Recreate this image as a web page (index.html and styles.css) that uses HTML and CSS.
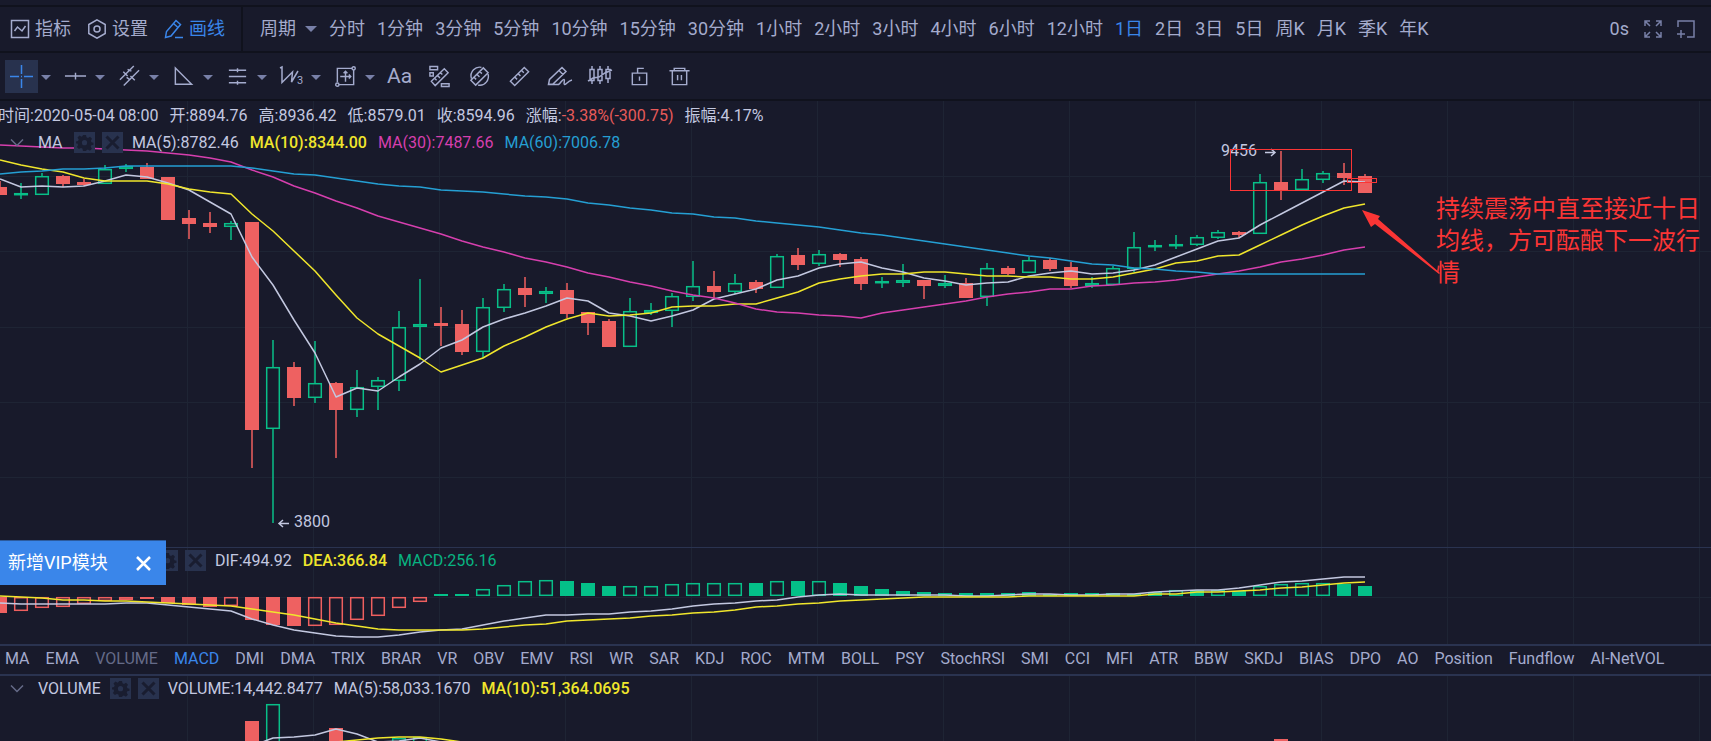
FILE: index.html
```html
<!DOCTYPE html>
<html lang="zh-CN">
<head>
<meta charset="utf-8">
<title>K线图</title>
<link rel="stylesheet" href="styles.css">
</head>
<body>
<svg class="defs" aria-hidden="true">
  <symbol id="gear" viewBox="0 0 21 21"><path d="M9 3h3l.5 2.2 1.5.7 2-1.2 2 2-1.200 2 .7 1.500 2 .5v2l-2.200.6-.6 1.500 1.200 2-2 2-2-1.200-1.500.7L12 19H9l-.6-2.400-1.500-.7-2 1.200-2-2 1.200-2-.6-1.500L2 11.500v-2l2-.5.7-1.500-1.200-2 2-2 2 1.200 1.100-.7z"/><circle cx="10.500" cy="10.700" r="2.600" class="hole"/></symbol>
  <symbol id="cross" viewBox="0 0 21 21"><path d="M4.500 4.500l12 12M16.500 4.500l-12 12"/></symbol>
</svg>
<div class="app">
  <div class="strip"></div>
  <header class="topbar">
    <nav class="modes">
      <button class="mode"><svg width="20" height="20" viewBox="0 0 20 20"><path d="M1.500 1.500h17v17h-17zM4.500 12l3-4 4.500 4 3.500-5"/></svg>指标</button>
      <button class="mode"><svg width="20" height="20" viewBox="0 0 20 20"><path d="M10 .8l8.200 4.700v9L10 19.200l-8.200-4.700v-9z"/><circle cx="10" cy="10" r="3"/></svg>设置</button>
      <button class="mode on"><svg width="20" height="20" viewBox="0 0 20 20"><path d="M1.500 18.500l1-6L12 1.500l4.500 4L7 17zM9.500 4.500l4.500 4M11 18.500h8"/></svg>画线</button>
    </nav>
    <div class="periods">
      <label class="picker"><select aria-label="周期"><option>周期</option></select><svg class="caret" width="12" height="6" viewBox="0 0 12 6"><path d="M0 0h12L6 6z"/></svg></label>
      <button>分时</button><button>1分钟</button><button>3分钟</button><button>5分钟</button><button>10分钟</button><button>15分钟</button><button>30分钟</button><button>1小时</button><button>2小时</button><button>3小时</button><button>4小时</button><button>6小时</button><button>12小时</button><button class="on">1日</button><button>2日</button><button>3日</button><button>5日</button><button>周K</button><button>月K</button><button>季K</button><button>年K</button>
    </div>
    <div class="right">
      <span>0s</span>
      <button aria-label="全屏"><svg width="18" height="18" viewBox="0 0 18 18"><path d="M1 6V1h5M1 1l5 5M12 1h5v5M17 1l-5 5M1 12v5h5M1 17l5-5M17 12v5h-5M17 17l-5-5"/></svg></button>
      <button aria-label="新窗口"><svg width="18" height="18" viewBox="0 0 18 18"><path d="M1 7V1h16v16h-7M4 10v8M0 14h8"/></svg></button>
    </div>
  </header>

  <div class="tools">
    <div class="tool"><button class="ico on" aria-label="十字线"><svg width="23" height="23" viewBox="0 0 23 23"><path d="M0 11.500h9M14 11.500h9M11.500 0v9M11.500 14v9M11 11.500h1" stroke-width="1.500"/></svg></button><button class="drop" aria-label="更多"></button></div>
    <div class="tool"><button class="ico" aria-label="线段"><svg width="23" height="23" viewBox="0 0 24 24"><path d="M1 11.500h22M12 8v7"/></svg></button><button class="drop" aria-label="更多"></button></div>
    <div class="tool"><button class="ico" aria-label="平行线"><svg width="23" height="23" viewBox="0 0 24 24"><path d="M2 15.500L16.500 1M6 21.500L22 5.500M5.500 7l4.500 4.500M13 11.500l4.500 4.500M10 4.500l4 2M12 15l-3-2"/></svg></button><button class="drop" aria-label="更多"></button></div>
    <div class="tool"><button class="ico" aria-label="三角形"><svg width="23" height="23" viewBox="0 0 24 24"><path d="M3.500 3v17h17z"/></svg></button><button class="drop" aria-label="更多"></button></div>
    <div class="tool"><button class="ico" aria-label="水平线"><svg width="23" height="23" viewBox="0 0 24 24"><path d="M3 5.500h18M3 12h18M3 18.500h18M12 3.500v4M12 16.500v4"/></svg></button><button class="drop" aria-label="更多"></button></div>
    <div class="tool"><button class="ico" aria-label="波浪"><svg width="26" height="24" viewBox="0 0 26 24"><path d="M1 4l2-1v15.500L13.500 8l-1 10L19 7"/><text x="18" y="20" class="tiny">3</text></svg></button><button class="drop" aria-label="更多"></button></div>
    <div class="tool"><button class="ico" aria-label="矩形"><svg width="23" height="23" viewBox="0 0 24 24"><path d="M3.500 18V3.500H19M20.500 5v15.500H5M12 6.500v11M6.500 12h11M10 8.500l2-2 2 2M15.500 10l2 2-2 2"/><circle cx="20.500" cy="3.500" r="1.700"/><circle cx="3.500" cy="20.500" r="1.700"/></svg></button><button class="drop" aria-label="更多"></button></div>
    <div class="singles">
      <button class="ico aa">Aa</button>
      <button class="ico" aria-label="测量"><svg width="23" height="23" viewBox="0 0 24 24"><path d="M3.500 17L17 4l4 4L7.500 21.500zM7 14l2 2M10 11l2.500 2.500M13 8l2 2M2 1.500h8v3.500H2zM2 8h3.500v3.500H2zM14 19.500h8v3h-8z"/></svg></button>
      <button class="ico" aria-label="隐藏"><svg width="23" height="23" viewBox="0 0 24 24"><path d="M3 16L16 3l5 5L8 21zM6.500 13l2 2M9.500 10l2.500 2.500M12.500 7l2 2M14 2.500C8 1 1.500 7 3.500 14M10.500 21C18 22.500 22.500 15 21 9.500"/></svg></button>
      <button class="ico" aria-label="标尺"><svg width="23" height="23" viewBox="0 0 24 24"><path d="M2.500 17L17 2.500l4.500 4.500L7 21.500zM7 12.500l2.500 2.500M10.500 9l2.500 2.500M14 5.500L16.500 8"/></svg></button>
      <button class="ico" aria-label="画笔"><svg width="26" height="24" viewBox="0 0 26 24"><path d="M1.500 20.500l1-5L15 3.500l4 4L6 20zM12 6.500l4 4M1.500 20.500h10c2-1 4-5.500 5.500-5s-1 4.500.5 5 3-3.500 7.500-4.500"/></svg></button>
      <button class="ico" aria-label="K线"><svg width="26" height="24" viewBox="0 0 26 24"><path d="M3 5.500h4v11H3zM11 5.500h4v11h-4zM19 5.500h4v9h-4zM5 2v3.500M5 16.500V20M13 2v3.500M13 16.500V20M21 2v3.500M21 14.500V19M1 17l5-3 6-1 6-4 7-3"/></svg></button>
      <button class="ico" aria-label="锁定"><svg width="23" height="23" viewBox="0 0 24 24"><path d="M4.500 8.500h15v12h-15zM10 8.500v-5h6.500M12 12v4.500"/></svg></button>
      <button class="ico" aria-label="删除"><svg width="23" height="23" viewBox="0 0 24 24"><path d="M1.500 6h21M6.500 6V3.500h11V6M4.500 6v14.500h15V6M10 10.500v5.500M14 10.500v5.500"/></svg></button>
    </div>
  </div>

  <main class="charts">
    <section class="pane">
      <svg class="plot" id="price" viewBox="0 101 1711 446"></svg>
      <div class="info">
        <div class="quote"><span>时间:2020-05-04 08:00</span><span>开:8894.76</span><span>高:8936.42</span><span>低:8579.01</span><span>收:8594.96</span><span>涨幅:<span class="down">-3.38%(-300.75)</span></span><span>振幅:4.17%</span></div>
        <div class="legend">
          <button class="fold" aria-label="收起"><svg width="14" height="8" viewBox="0 0 14 8"><path d="M1 .5l6 6 6-6"/></svg></button>
          <span class="name">MA</span>
          <button class="sq" aria-label="设置"><svg width="21" height="21" class="gear"><use href="#gear"/></svg></button>
          <button class="sq" aria-label="关闭"><svg width="21" height="21" class="cross"><use href="#cross"/></svg></button>
          <span class="vals"><span>MA(5):8782.46</span><span class="yellow">MA(10):8344.00</span><span class="pink">MA(30):7487.66</span><span class="blue">MA(60):7006.78</span></span>
        </div>
      </div>
    </section>
    <section class="pane macd">
      <svg class="plot" id="macd" viewBox="0 548 1711 96"></svg>
      <div class="info">
        <div class="legend">
          <button class="sq" aria-label="设置"><svg width="21" height="21" class="gear"><use href="#gear"/></svg></button>
          <button class="sq" aria-label="关闭"><svg width="21" height="21" class="cross"><use href="#cross"/></svg></button>
          <span class="vals"><span>DIF:494.92</span><span class="yellow">DEA:366.84</span><span class="green">MACD:256.16</span></span>
        </div>
      </div>
      <div class="toast">新增VIP模块<button aria-label="关闭"><svg width="17" height="17" viewBox="0 0 17 17"><path d="M2 2l13 13M15 2L2 15"/></svg></button></div>
    </section>
    <nav class="tabs">
      <button>MA</button><button>EMA</button><button class="dim">VOLUME</button><button class="on">MACD</button><button>DMI</button><button>DMA</button><button>TRIX</button><button>BRAR</button><button>VR</button><button>OBV</button><button>EMV</button><button>RSI</button><button>WR</button><button>SAR</button><button>KDJ</button><button>ROC</button><button>MTM</button><button>BOLL</button><button>PSY</button><button>StochRSI</button><button>SMI</button><button>CCI</button><button>MFI</button><button>ATR</button><button>BBW</button><button>SKDJ</button><button>BIAS</button><button>DPO</button><button>AO</button><button>Position</button><button>Fundflow</button><button>AI-NetVOL</button>
    </nav>
    <section class="pane">
      <svg class="plot" id="volume" viewBox="0 676 1711 65"></svg>
      <div class="info">
        <div class="legend">
          <button class="fold" aria-label="收起"><svg width="14" height="8" viewBox="0 0 14 8"><path d="M1 .5l6 6 6-6"/></svg></button>
          <span class="name">VOLUME</span>
          <button class="sq" aria-label="设置"><svg width="21" height="21" class="gear"><use href="#gear"/></svg></button>
          <button class="sq" aria-label="关闭"><svg width="21" height="21" class="cross"><use href="#cross"/></svg></button>
          <span class="vals"><span>VOLUME:14,442.8477</span><span>MA(5):58,033.1670</span><span class="yellow">MA(10):51,364.0695</span></span>
        </div>
      </div>
    </section>
  </main>
</div>
<script src="chart.js"></script>
</body>
</html>
```

FILE: styles.css
```css
* { box-sizing: border-box; }
body {
  margin: 0;
  background: #181a2b;
  color: #c3c8e0;
  font: 16px/20px Roboto, "Noto Sans CJK SC", sans-serif;
}
button, select {
  margin: 0;
  padding: 0;
  border: 0;
  background: none;
  color: inherit;
  font: inherit;
  white-space: nowrap;
  cursor: pointer;
}
svg { display: block; flex: none; }
.defs { position: absolute; width: 0; height: 0; }
.app { min-height: 100vh; overflow: hidden; }
.strip { height: 7px; border-bottom: 2px solid #10121d; }

.topbar {
  display: flex;
  height: 46px;
  border-bottom: 2px solid #10121d;
  color: #a4abcd;
  font-size: 18px;
}
.modes {
  display: flex;
  align-items: center;
  gap: 16px;
  padding: 0 16px 0 10px;
  border-right: 2px solid #10121d;
}
.mode { display: flex; align-items: center; gap: 5px; }
.mode svg, .ico svg, .right svg {
  fill: none;
  stroke: currentColor;
  stroke-width: 1.5;
}
.on { color: #3a86ea; }
.periods {
  display: flex;
  flex: 1;
  align-items: center;
  gap: 12px;
  padding-left: 17px;
}
.picker { display: flex; align-items: center; gap: 9px; }
.picker select { appearance: none; outline: 0; }
.caret { fill: #7880a8; }
.right {
  display: flex;
  align-items: center;
  gap: 15px;
  padding-right: 16px;
}
.right button { color: #7880a8; }

.tools {
  display: flex;
  align-items: center;
  height: 48px;
  padding-left: 5px;
  border-bottom: 2px solid #10121d;
  color: #a4abcd;
}
.tool { display: flex; align-items: center; width: 54px; gap: 3px; }
.ico {
  display: flex;
  flex: none;
  align-items: center;
  justify-content: center;
  width: 33px;
  height: 33px;
}
.ico.on { background: #28324e; }
.aa { font-size: 21px; }
.tiny { fill: currentColor; stroke: none; font-size: 11px; }
.drop::after {
  content: "";
  display: block;
  margin-top: 3px;
  border: solid transparent;
  border-width: 5px 5px 0;
  border-top-color: #7880a8;
}
.singles { display: flex; gap: 7px; }

.pane {
  position: relative;
  display: grid;
}
.pane > .plot, .pane > .info { grid-area: 1 / 1; }
.plot { width: 100%; height: auto; }
.info { position: relative; align-self: start; white-space: nowrap; }
.macd { border-top: 1px solid #2a3350; }
.quote {
  display: flex;
  gap: 11px;
  margin-left: -2px;
  padding: 5px 0 4px;
}
.down { color: #e85a5a; }
.legend {
  display: flex;
  align-items: center;
  height: 25px;
  gap: 7px;
  padding-left: 10px;
}
.fold svg { fill: none; stroke: #656b88; stroke-width: 1.5; }
.name { min-width: 27px; margin: 0 2px 0 7px; }
.sq { background: #28324e; }
.gear { fill: #191d30; }
.hole { fill: #28324e; }
.cross { stroke: #191d30; stroke-width: 3; }
.vals { display: flex; gap: 11px; margin-left: 2px; }
.yellow { color: #f0e62c; font-weight: 500; }
.pink { color: #d63fae; }
.blue { color: #259fd3; }
.green { color: #08b381; }
.macd .legend { padding-left: 157px; }

.toast {
  position: absolute;
  top: -8px;
  left: 0;
  display: flex;
  align-items: center;
  gap: 27px;
  height: 45px;
  padding: 0 14px 0 8px;
  border-top: 1px solid #2c5a9c;
  background: #3a86ea;
  color: #fff;
  font-size: 18px;
}
.toast path { stroke: #fff; stroke-width: 2.5; }

.tabs {
  display: flex;
  gap: 16px;
  padding: 3px 5px 5px;
  border: solid #2a3350;
  border-width: 2px 0;
  color: #a4abcd;
}
.dim { color: #656b88; }
.tabs .on { color: #3a86ea; }

.grid { fill: none; stroke: #1e2434; }
.rise { fill: none; stroke: #08bf88; stroke-width: 1.500; }
.rise-fill { fill: #04c088; stroke: none; }
.fall { fill: none; stroke: #ee5f5f; stroke-width: 1.500; }
.fall-fill { fill: #ee6161; stroke: none; }
.line { fill: none; stroke-width: 1.500; stroke-linejoin: round; }
.l-white { stroke: #c3c8e0; }
.l-yellow { stroke: #f0e62c; }
.l-pink { stroke: #d63fae; }
.l-blue { stroke: #259fd3; }
.mark { fill: #c3c8e0; font-size: 16px; }
.mark-arrow { fill: none; stroke: #c3c8e0; stroke-width: 1.500; }
.box { fill: none; stroke: #fb3535; }
.pointer { fill: #fb3535; }
.note { fill: #fb3535; font: 24px "Noto Sans CJK SC", sans-serif; }
```

FILE: chart.js
```js
const STEP = 21;

// [body top, body bottom, wick top, wick bottom, rising]
const candles = [
  [187,195,181,195,0],[193,195,183,199,1],[176,195,173,195,1],[176,184,175,187,0],[182,185,179,186,0],
  [169,184,165,184,1],[166,169,164,172,1],[167,179,163,179,0],[177,220,177,220,0],[218,224,210,239,0],
  [223,227,212,233,0],[223,227,221,240,1],[222,430,222,468,0],[367,429,340,523,1],[367,398,362,406,0],
  [383,398,341,403,1],[383,410,382,458,0],[387,410,370,417,1],[380,387,377,410,1],[327,381,311,391,1],
  [324,327,279,360,1],[323,326,307,346,0],[324,352,310,355,0],[307,352,298,358,1],[289,308,284,312,1],
  [288,295,277,307,0],[291,294,287,303,1],[290,314,283,318,0],[312,323,312,335,0],[321,347,319,347,0],
  [311,347,298,347,1],[310,313,303,315,1],[296,311,293,327,1],[286,297,261,301,1],[286,292,271,298,0],
  [283,292,274,294,1],[282,289,280,293,0],[256,288,254,288,1],[255,265,248,270,0],[254,264,250,266,1],
  [254,260,253,267,0],[259,284,257,290,0],[281,283,277,288,1],[280,283,264,287,1],[280,286,280,299,0],
  [283,286,275,288,1],[283,298,278,298,0],[268,297,263,306,1],[268,274,266,275,0],[260,273,257,273,1],
  [260,269,258,271,0],[267,286,262,288,0],[283,286,277,288,1],[268,285,266,285,1],[247,269,232,272,1],
  [245,247,240,251,1],[244,246,235,249,1],[237,245,235,246,1],[232,238,230,239,1],[232,235,231,238,0],
  [182,234,174,234,1],[182,191,151,200,0],[179,190,169,190,1],[173,180,171,183,1],[173,178,163,185,0],
  [176,193,174,193,0]
];

const ma5 = [179,187,186,187,186,181,175,177,183,190,202,214,257,285,320,353,397,388,391,377,364,348,340,327,319,313,306,298,301,313,316,321,316,310,299,294,289,280,276,268,264,262,268,272,278,281,285,283,282,276,273,271,274,273,270,265,257,249,241,238,225,214,203,192,181,182];
const ma10 = [160,165,169,172,178,181,181,181,184,189,192,194,214,231,251,271,295,318,334,346,358,372,365,358,346,337,327,319,313,316,315,313,307,306,306,304,304,298,292,283,279,276,274,274,272,272,274,276,276,277,277,279,279,277,273,269,263,261,256,255,245,235,225,216,208,204];
const ma30 = [145,146,147,148,148,149,150,151,153,155,158,162,170,177,186,193,201,208,216,222,228,234,241,247,252,258,262,267,273,277,282,286,291,295,298,303,309,312,313,315,316,318,313,310,307,304,301,297,294,292,289,289,286,285,283,282,280,277,274,271,267,262,259,255,250,247];
const ma60 = [174,172,171,169,169,168,166,166,166,166,166,166,168,171,174,175,178,181,184,186,187,190,191,192,194,196,197,199,203,205,208,210,213,214,217,218,221,223,225,227,230,233,235,238,241,244,247,250,253,256,258,261,264,265,268,269,271,272,274,274,274,274,274,274,274,274];

// [bar edge, hollow, rising]
const bars = [
  [613,0,0],[611,1,0],[608,1,0],[607,1,0],[604,1,0],[601,1,0],[600,1,0],[599,0,0],[603,0,0],[605,0,0],[607,0,0],
  [606,1,0],[620,0,0],[625,0,0],[626,0,0],[626,1,0],[625,1,0],[620,1,0],[616,1,0],[608,1,0],[602,1,0],
  [594,0,1],[594,0,1],[589,1,1],[585,1,1],[581,1,1],[580,1,1],[581,0,1],[583,0,1],[586,0,1],[586,1,1],[586,1,1],
  [584,1,1],[583,1,1],[583,1,1],[583,1,1],[583,0,1],[581,1,1],[581,0,1],[581,1,1],[583,0,1],[586,0,1],[589,0,1],
  [591,0,1],[592,0,1],[593,0,1],[593,0,1],[593,0,1],[593,0,1],[592,0,1],[594,0,1],[593,0,1],[593,0,1],[593,0,1],
  [594,0,1],[592,0,1],[590,1,1],[590,0,1],[590,1,1],[591,0,1],[586,1,1],[584,1,1],[583,1,1],[583,1,1],[584,0,1],[586,0,1]
];
const dif = [603,604,604,604,604,604,603,603,605,607,609,611,619,625,630,633,636,637,637,635,632,630,629,625,621,618,615,615,614,614,612,611,609,606,604,603,601,600,597,595,594,595,595,595,595,595,596,596,595,594,594,595,595,594,594,592,591,590,590,588,585,582,581,579,577,577];
const dea = [596,597,598,600,600,601,601,602,603,604,605,606,609,612,615,619,623,626,629,630,630,630,630,629,627,625,624,621,620,619,618,616,615,613,612,610,607,606,604,603,601,600,599,598,597,597,597,597,597,596,596,596,596,596,596,594,594,592,592,591,590,588,587,585,583,582];

const grid = (top, bottom, rows) => {
  let d = '';
  for (let x = 187.5; x < 1711; x += 126) d += `M${x} ${top}V${bottom}`;
  rows.forEach(y => { d += `M0 ${y}.5H1711`; });
  return `<path class="grid" d="${d}"/>`;
};
const line = (values, color, from = 0) =>
  `<polyline class="line l-${color}" points="${values.map((y, i) => `${(i + from) * STEP},${y}`).join(' ')}"/>`;
const block = (x, top, bottom, kind, hollow) => hollow
  ? `<rect class="${kind}" x="${x - 6.3}" y="${top + 0.7}" width="12.600" height="${Math.max(bottom - top - 1.4, 1)}"/>`
  : `<rect class="${kind}-fill" x="${x - 7}" y="${top}" width="14" height="${bottom - top}"/>`;

const candle = ([top, bottom, high, low, up], i) => {
  const x = i * STEP, kind = up ? 'rise' : 'fall';
  return `<path class="${kind}" d="M${x} ${high}V${top}M${x} ${bottom}V${low}"/>` + block(x, top, bottom, kind, up);
};

document.getElementById('price').innerHTML =
  grid(101, 547, [176, 251, 327, 402, 477]) +
  candles.map(candle).join('') +
  line(ma5, 'white') + line(ma10, 'yellow') + line(ma30, 'pink') + line(ma60, 'blue') +
  `<text class="mark" x="1221" y="156">9456</text><path class="mark-arrow" d="M1265 152.500h10M1271 149l4 3.500-4 3.500"/>
   <text class="mark" x="294" y="527">3800</text><path class="mark-arrow" d="M289 523.500h-10M283 520l-4 3.500 4 3.500"/>
   <rect class="box" x="1230.500" y="149.500" width="121" height="41"/>
   <rect class="box" x="1347.500" y="178.500" width="29" height="4"/>
   <path class="pointer" d="M1362 210l18 6-2 3 62 54-1 1-64-50-4 3z"/>
   <text class="note"><tspan x="1436" y="217">持续震荡中直至接近十日</tspan><tspan x="1436" y="249">均线，方可酝酿下一波行</tspan><tspan x="1436" y="281">情</tspan></text>`;

document.getElementById('macd').innerHTML =
  grid(548, 644, [597]) +
  bars.map(([edge, hollow, up], i) => up
    ? block(i * STEP, edge, 596, 'rise', hollow)
    : block(i * STEP, 597, edge, 'fall', hollow)).join('') +
  line(dif, 'white') + line(dea, 'yellow');

document.getElementById('volume').innerHTML =
  grid(676, 741, []) +
  block(252, 721, 745, 'fall', 0) + block(273, 704, 745, 'rise', 1) + block(336, 728, 745, 'fall', 0) +
  block(399, 738, 745, 'rise', 1) + block(420, 737, 745, 'rise', 1) + block(1281, 739, 745, 'fall', 0) +
  line([746,738,737,735,729,734,742,741,738,742], 'white', 12) +
  line([742,740,738,737,737,739,742], 'yellow', 16);
```
